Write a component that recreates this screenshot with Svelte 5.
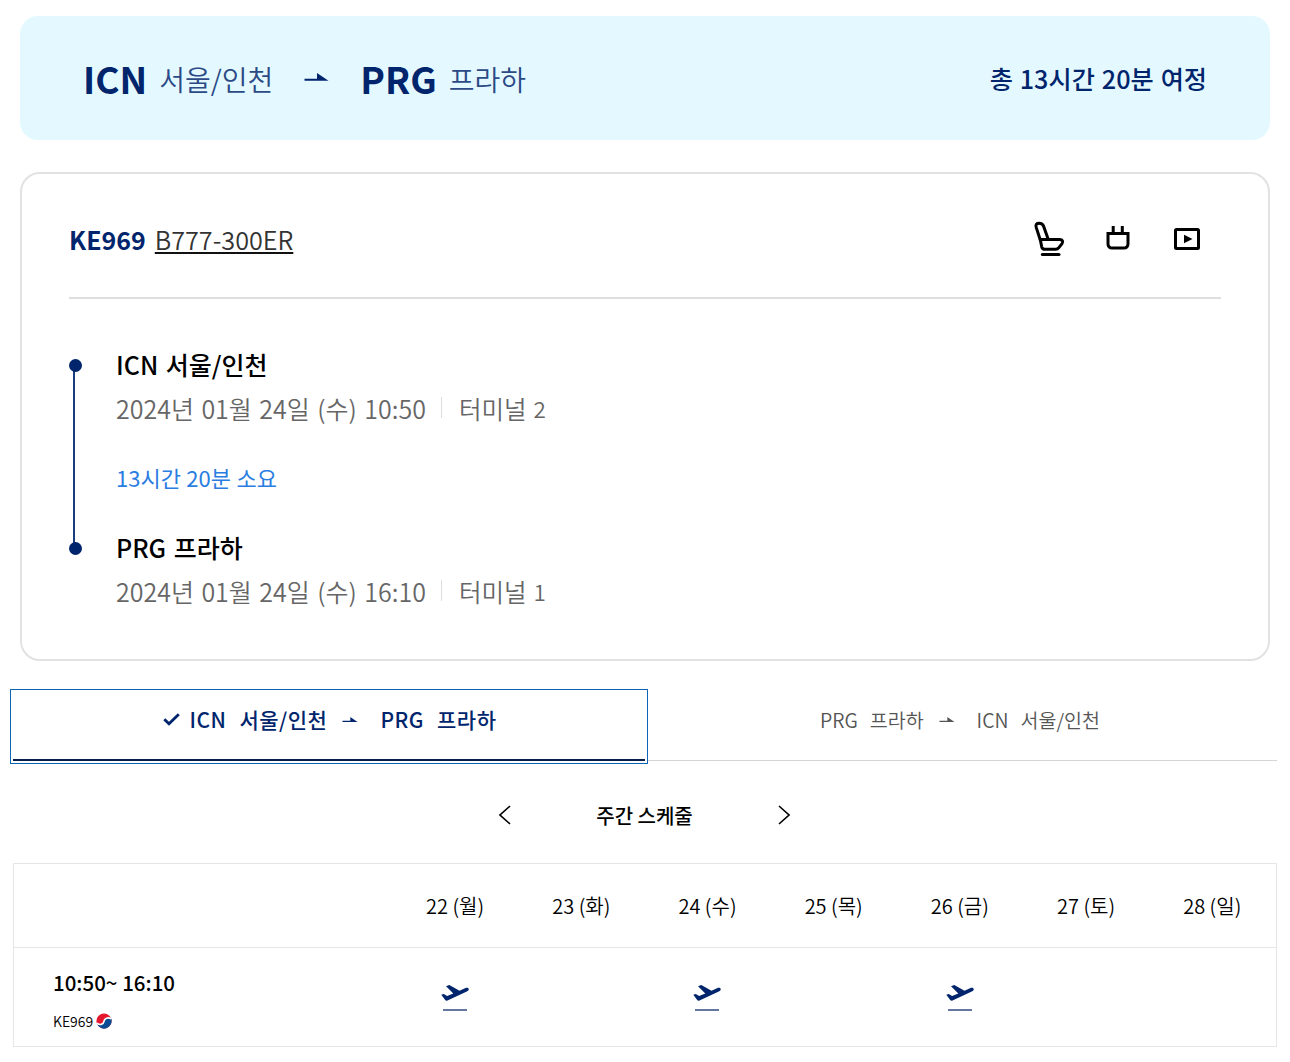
<script lang="ts">
  type Stop = {
    code: string;
    city: string;
    time: string;
    terminal: number;
  };

  const departure: Stop = { code: 'ICN', city: '서울/인천', time: '2024년 01월 24일 (수) 10:50', terminal: 2 };
  const arrival: Stop = { code: 'PRG', city: '프라하', time: '2024년 01월 24일 (수) 16:10', terminal: 1 };

  const days = [
    { label: '22 (월)', flight: true },
    { label: '23 (화)', flight: false },
    { label: '24 (수)', flight: true },
    { label: '25 (목)', flight: false },
    { label: '26 (금)', flight: true },
    { label: '27 (토)', flight: false },
    { label: '28 (일)', flight: false }
  ];

  let activeTab = $state(0);
</script>

{#snippet arrow()}
  <svg class="arrow" viewBox="0 0 24 8" fill="currentColor" aria-hidden="true">
    <path d="M0 5.800h12.500V0L24 7.800H0z" />
  </svg>
{/snippet}

{#snippet stopInfo(stop: Stop)}
  <div class="stop">
    <h3>{stop.code} {stop.city}</h3>
    <p>
      <span class="time">{stop.time}</span>
      <span class="bar"></span>
      <span class="terminal">터미널</span>
      <span class="terminal-no">{stop.terminal}</span>
    </p>
  </div>
{/snippet}

<main>
  <header class="summary">
    <strong class="code">{departure.code}</strong>
    <span class="city">{departure.city}</span>
    {@render arrow()}
    <strong class="code">{arrival.code}</strong>
    <span class="city">{arrival.city}</span>
    <strong class="total">총 13시간 20분 여정</strong>
  </header>

  <section class="card">
    <div class="card-head">
      <strong class="flight-no">KE969</strong>
      <a class="aircraft" href="#aircraft">B777-300ER</a>
      <div class="amenities">
        <svg class="seat" viewBox="0 0 32 36" fill="none" stroke="#000" stroke-width="3" stroke-linejoin="round" stroke-linecap="round">
          <path d="M7.300 19 3.200 6.400C2.300 3.400 3.800 2.300 6 2.300c2.500 0 3.800.6 4.600 3l4.600 13" />
          <path d="M7.300 18.600h19.400c3 0 3.700 2 2.300 4l-3.100 4c-1 1.300-1.800 1.700-3.300 1.700H12c-2 0-2.900-.8-3.300-2.500z" />
          <path d="M9.300 33.500h16.700" />
        </svg>
        <svg class="plug" viewBox="0 0 24 26" fill="none" stroke="#000" stroke-width="3">
          <path d="M7.200 1v7M16.300 1v7" />
          <path d="M2 8.500h20v10.200c0 2.900-1.400 4.300-4.300 4.300H6.300C3.400 23 2 21.600 2 18.700z" />
        </svg>
        <svg class="video" viewBox="0 0 26 22" fill="none" stroke="#000" stroke-width="3">
          <rect x="1.500" y="1.500" width="23" height="19" rx="1" />
          <path d="M10 6.800v8.400l8.500-4.200z" fill="#000" stroke="none" />
        </svg>
      </div>
    </div>

    <div class="route">
      <div class="timeline"><i></i><i></i></div>
      <div class="stops">
        {@render stopInfo(departure)}
        <p class="duration">13시간 20분 소요</p>
        {@render stopInfo(arrival)}
      </div>
    </div>
  </section>

  <nav class="tabs">
    <button class="tab" class:active={activeTab === 0} onclick={() => (activeTab = 0)}>
      {#if activeTab === 0}
        <svg class="check" viewBox="0 0 17 13" fill="none" stroke="currentColor" stroke-width="2.800">
          <path d="m1.300 6.200 4.700 4.600L15.800 1.200" />
        </svg>
      {/if}
      <span>ICN</span>
      <span class="name">서울/인천</span>
      {@render arrow()}
      <span>PRG</span>
      <span class="name">프라하</span>
    </button>
    <button class="tab" class:active={activeTab === 1} onclick={() => (activeTab = 1)}>
      <span>PRG</span>
      <span class="name">프라하</span>
      {@render arrow()}
      <span>ICN</span>
      <span class="name">서울/인천</span>
    </button>
  </nav>

  <div class="week-nav">
    <button aria-label="이전 주">
      <svg viewBox="0 0 12 20"><path d="M11 1 1 10 11 19" /></svg>
    </button>
    <strong>주간 스케줄</strong>
    <button aria-label="다음 주">
      <svg viewBox="0 0 12 20"><path d="m1 1 10 9L1 19" /></svg>
    </button>
  </div>

  <div class="schedule">
    <div class="row head">
      <span></span>
      {#each days as day}
        <span class="day">{day.label}</span>
      {/each}
    </div>
    <div class="row body">
      <div class="flight">
        <strong>10:50~ 16:10</strong>
        <div class="carrier">
          <span>KE969</span>
          <svg viewBox="0 0 16 16" aria-hidden="true">
            <circle cx="8" cy="8" r="7.600" fill="#e3172d" />
            <path d="M1 11c3 1.600 6.500.5 6.900-2.500S11.600 3.600 15 5a7.600 7.600 0 0 1-14 6z" fill="#0b4b96" />
            <path d="M.8 10.200c2.700 2.400 6.600 1.300 7.100-1.700s4-4.700 7.300-2.700" fill="none" stroke="#fff" stroke-width="1.600" />
          </svg>
        </div>
      </div>
      {#each days as day}
        <div class="cell">
          {#if day.flight}
            <svg class="plane" viewBox="0 0 28 17" aria-hidden="true">
              <path d="M.3 9.800 2.800 9l3.300 2.100 6.200-2.700L5 1.200 8.300 0l10.200 5.700 5.500-2.500c2-.8 3.500-.3 3.700.9.200 1.100-.6 1.800-1.900 2.400L6.500 15.500c-1 .4-1.700.2-2.300-.5z" fill="currentColor" />
            </svg>
          {/if}
        </div>
      {/each}
    </div>
  </div>
</main>

<style>
  :global(body) {
    margin: 0;
    background: #fff;
  }

  main {
    width: 1290px;
    height: 1062px;
    padding-top: 16px;
    box-sizing: border-box;
    overflow: hidden;
    font-family: "Noto Sans CJK KR", "Noto Sans", sans-serif;
    color: #000;
  }

  h3, p {
    margin: 0;
  }

  button {
    padding: 0;
    border: 0;
    background: none;
    font: inherit;
    color: inherit;
    cursor: pointer;
  }

  svg {
    display: block;
    flex-shrink: 0;
  }

  .summary {
    display: flex;
    align-items: center;
    height: 124px;
    margin: 0 20px;
    padding: 0 63px;
    box-sizing: border-box;
    border-radius: 18px;
    background: #e4f9ff;
    color: #00256c;
    line-height: 54px;
    white-space: nowrap;
  }

  .summary .code {
    font-size: 37px;
    font-weight: 700;
  }

  .summary .city {
    margin-left: 12px;
    padding-top: 2px;
    font-size: 28px;
    font-weight: 350;
    color: #2b4a86;
  }

  .summary .arrow {
    width: 25px;
    height: 8px;
    margin: -2px 31px 0;
  }

  .summary .total {
    margin-left: auto;
    font-size: 25.200px;
    font-weight: 500;
    word-spacing: 1.300px;
  }

  .card {
    height: 489px;
    margin: 32px 20px 0;
    padding: 0 47px;
    box-sizing: border-box;
    border: 2px solid #e2e2e2;
    border-radius: 20px;
  }

  .card-head {
    display: flex;
    align-items: center;
    height: 125px;
    padding-top: 6px;
    box-sizing: border-box;
    border-bottom: 2px solid #dfdfdf;
    font-size: 25px;
    line-height: 36px;
  }

  .flight-no {
    color: #00256c;
    font-weight: 700;
  }

  .aircraft {
    margin-left: 9px;
    color: #333;
    font-size: 25.200px;
    font-weight: 350;
    text-decoration: underline #111;
    text-decoration-thickness: 2px;
    text-underline-offset: 2px;
  }

  .amenities {
    display: flex;
    align-items: center;
    margin-left: auto;
    padding-right: 21px;
  }

  .seat {
    width: 32px;
    height: 36px;
  }

  .plug {
    width: 24px;
    height: 26px;
    margin: 0 44px 2px 41px;
  }

  .video {
    width: 26px;
    height: 22px;
  }

  .route {
    display: flex;
    padding-top: 45px;
  }

  .timeline {
    display: flex;
    flex-direction: column;
    justify-content: space-between;
    align-items: center;
    width: 12px;
    height: 196px;
    margin-top: 15px;
    background: linear-gradient(#173f80, #173f80) 4px center / 2px 184px no-repeat;
  }

  .timeline i {
    width: 13px;
    height: 13px;
    border-radius: 50%;
    background: #00256c;
  }

  .stops {
    margin-left: 35px;
  }

  .stop h3 {
    font-size: 25px;
    font-weight: 500;
    line-height: 40px;
    word-spacing: 2px;
  }

  .stop p {
    display: flex;
    align-items: center;
    height: 47px;
    color: #666;
    font-size: 25px;
    font-weight: 350;
    line-height: 47px;
    white-space: nowrap;
  }

  .time {
    padding-top: 1px;
    word-spacing: 1.900px;
  }

  .bar {
    width: 1px;
    height: 21px;
    margin: 0 17px 0 15px;
    background: #ddd;
  }

  .terminal {
    padding-top: 1px;
    font-size: 24.500px;
  }

  .terminal-no {
    margin-left: 7px;
    padding-top: 1px;
    font-size: 22.500px;
  }

  .duration {
    height: 96px;
    color: #2a7de1;
    font-size: 22px;
    line-height: 93px;
    word-spacing: .500px;
  }

  .tabs {
    display: flex;
    height: 75px;
    margin: 28px 13px 0 10px;
  }

  .tab {
    display: flex;
    align-items: center;
    justify-content: center;
    width: 629px;
    height: 72px;
    padding: 0 5px 10px 0;
    box-sizing: border-box;
    border-bottom: 1px solid #d5d5d5;
    color: #555;
    font-size: 19.500px;
    font-weight: 350;
    white-space: nowrap;
  }

  .tab.active {
    width: 638px;
    height: 75px;
    padding: 0 0 15px 2px;
    border: 1px solid #0c64b4;
    background: linear-gradient(#051f4c, #051f4c) 2px 69px / 632px 2px no-repeat;
    color: #00256c;
    font-size: 21px;
    font-weight: 500;
    letter-spacing: .500px;
  }

  .check {
    width: 17px;
    height: 13px;
    margin-right: 9px;
  }

  .name {
    margin-left: 12px;
  }

  .active .name {
    margin-left: 13px;
  }

  .tab .arrow {
    width: 16px;
    height: 5px;
    margin: 0 22px 0 15px;
  }

  .week-nav {
    display: flex;
    align-items: center;
    justify-content: center;
    height: 99px;
    padding: 2px 1px 0 0;
    box-sizing: border-box;
  }

  .week-nav strong {
    width: 267px;
    padding-top: 2px;
    font-size: 20px;
    font-weight: 500;
    text-align: center;
  }

  .week-nav svg {
    width: 12px;
    height: 20px;
    fill: none;
    stroke: #000;
    stroke-width: 1.600;
  }

  .schedule {
    width: 1264px;
    margin-left: 13px;
    box-sizing: border-box;
    border: 1px solid #e6e6e6;
  }

  .row {
    display: grid;
    grid-template-columns: 378px repeat(7, 126.200px);
    align-items: center;
  }

  .head {
    height: 83px;
    border-bottom: 1px solid #e6e6e6;
  }

  .day {
    font-size: 20px;
    font-weight: 350;
    text-align: center;
  }

  .body {
    height: 98px;
  }

  .flight {
    padding: 3px 0 0 39px;
  }

  .flight strong {
    display: block;
    font-size: 20.500px;
    font-weight: 500;
    line-height: 30px;
  }

  .carrier {
    display: flex;
    align-items: center;
    margin-top: 14px;
    font-size: 14px;
    line-height: 20px;
    font-weight: 350;
  }

  .carrier svg {
    width: 16px;
    height: 16px;
    margin-left: 3px;
  }

  .cell {
    display: flex;
    justify-content: center;
    padding-top: 2px;
    color: #00256c;
  }

  .plane {
    width: 28px;
    height: 17px;
    padding-bottom: 9px;
    background: linear-gradient(#63779f, #63779f) 2px 100% / 24px 2px no-repeat;
  }
</style>
